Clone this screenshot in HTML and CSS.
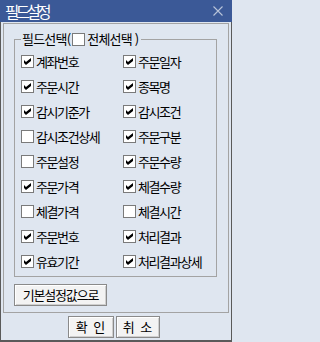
FILE: index.html
```html
<!DOCTYPE html>
<html lang="ko">
<head>
<meta charset="utf-8">
<title>필드설정</title>
<link rel="stylesheet" href="styles.css">
</head>
<body>
<div class="window">
  <div class="titlebar">
    <span class="title">필드설정</span>
    <svg class="close" width="10" height="10" viewBox="0 0 10 10"><path d="M0.5 0.5L9.5 9.5M9.5 0.5L0.5 9.5" stroke="#b9c4d9" stroke-width="1.1" fill="none"/></svg>
  </div>
  <div class="panel">
    <fieldset class="group">
      <legend class="legend">필드선택(<span class="cb"><svg width="13" height="13" viewBox="0 0 13 13"><rect x="0.5" y="0.5" width="12" height="12" fill="#fff" stroke="#7a7a7a"/></svg></span>전체선택 )</legend>
      <div class="grid">
        <label class="item"><span class="cb on"></span>계좌번호</label>
        <label class="item"><span class="cb on"></span>주문일자</label>
        <label class="item"><span class="cb on"></span>주문시간</label>
        <label class="item"><span class="cb on"></span>종목명</label>
        <label class="item"><span class="cb on"></span>감시기준가</label>
        <label class="item"><span class="cb on"></span>감시조건</label>
        <label class="item"><span class="cb"></span>감시조건상세</label>
        <label class="item"><span class="cb on"></span>주문구분</label>
        <label class="item"><span class="cb"></span>주문설정</label>
        <label class="item"><span class="cb on"></span>주문수량</label>
        <label class="item"><span class="cb on"></span>주문가격</label>
        <label class="item"><span class="cb on"></span>체결수량</label>
        <label class="item"><span class="cb"></span>체결가격</label>
        <label class="item"><span class="cb"></span>체결시간</label>
        <label class="item"><span class="cb on"></span>주문번호</label>
        <label class="item"><span class="cb on"></span>처리결과</label>
        <label class="item"><span class="cb on"></span>유효기간</label>
        <label class="item"><span class="cb on"></span>처리결과상세</label>
      </div>
    </fieldset>
    <button class="btn default">기본설정값으로</button>
  </div>
  <div class="actions">
    <button class="btn ok">확 인</button>
    <button class="btn cancel">취 소</button>
  </div>
</div>
</body>
</html>
```

FILE: styles.css
```css
html, body {
  margin: 0;
  padding: 0;
  background: #dfe6f0;
}
.window {
  width: 232px;
  height: 342px;
  box-sizing: border-box;
  border: 1px solid #5a5a5a;
  border-top: none;
  border-bottom-width: 2px;
  background: #dfe6f0;
  font-family: "Noto Sans CJK KR", sans-serif;
  font-size: 13px;
  color: #000;
  display: flex;
  flex-direction: column;
}
.titlebar {
  height: 22px;
  margin: 0 -1px;
  background: #3b5997;
  display: flex;
  align-items: center;
  justify-content: space-between;
  padding: 0 9px 0 5px;
  box-sizing: border-box;
}
.title {
  color: #fff;
  font-family: "Noto Sans CJK KR", sans-serif;
  font-size: 15.5px;
  letter-spacing: -3.5px;
  line-height: 22px;
}
.close {
  display: block;
  margin-top: -1px;
}
.panel {
  margin: 1px 2px 0 2px;
  height: 290px;
  box-sizing: border-box;
  border: 1px solid #a3a3a3;
  padding: 7px 0 0 10px;
}
.group {
  margin: 0;
  width: 203px;
  box-sizing: border-box;
  border: 1px solid #a3a3a3;
  padding: 2px 0 2px 6px;
}
.legend {
  padding: 0 3px 0 1px;
  margin-left: 0;
  height: 16px;
  line-height: 16px;
  font-size: 13px;
  letter-spacing: -0.8px;
  display: flex;
  align-items: center;
}
.legend .cb {
  margin: 0 2px 0 2px;
}
.legend .cb svg { display: block; }
.grid {
  display: grid;
  grid-template-columns: 102px 1fr;
  grid-auto-rows: 25px;
}
.item {
  display: flex;
  align-items: center;
  gap: 2px;
  font-size: 13px;
  letter-spacing: -1.4px;
  white-space: nowrap;
}
.cb {
  width: 13px;
  height: 13px;
  flex: none;
  box-sizing: border-box;
}
.item .cb {
  border: 1px solid #7a7a7a;
  background: #fff;
  position: relative;
}
.item .cb.on::after {
  content: "";
  position: absolute;
  left: 2px;
  top: 2px;
  width: 7px;
  height: 7px;
  background: #000;
  clip-path: polygon(0 28.5%, 28.5% 57%, 100% 0, 100% 43%, 28.5% 100%, 0 71.5%);
}
.btn {
  font-family: "Noto Sans CJK KR", sans-serif;
  font-size: 13px;
  letter-spacing: -1.2px;
  height: 22px;
  padding: 0;
  margin: 0;
  border: 1px solid #8a8a8a;
  background: #f3f3f3;
  box-shadow: inset 1px 1px #ffffff, inset -1px -1px #cfcfcf;
  color: #000;
  line-height: 18px;
}
.default {
  display: block;
  margin-top: 7px;
  width: 93px;
}
.actions {
  display: flex;
  justify-content: center;
  gap: 2px;
  margin-top: 3px;
  padding-right: 4px;
}
.ok, .cancel { letter-spacing: 1px; }
.ok { width: 46px; }
.cancel { width: 44px; }
```
